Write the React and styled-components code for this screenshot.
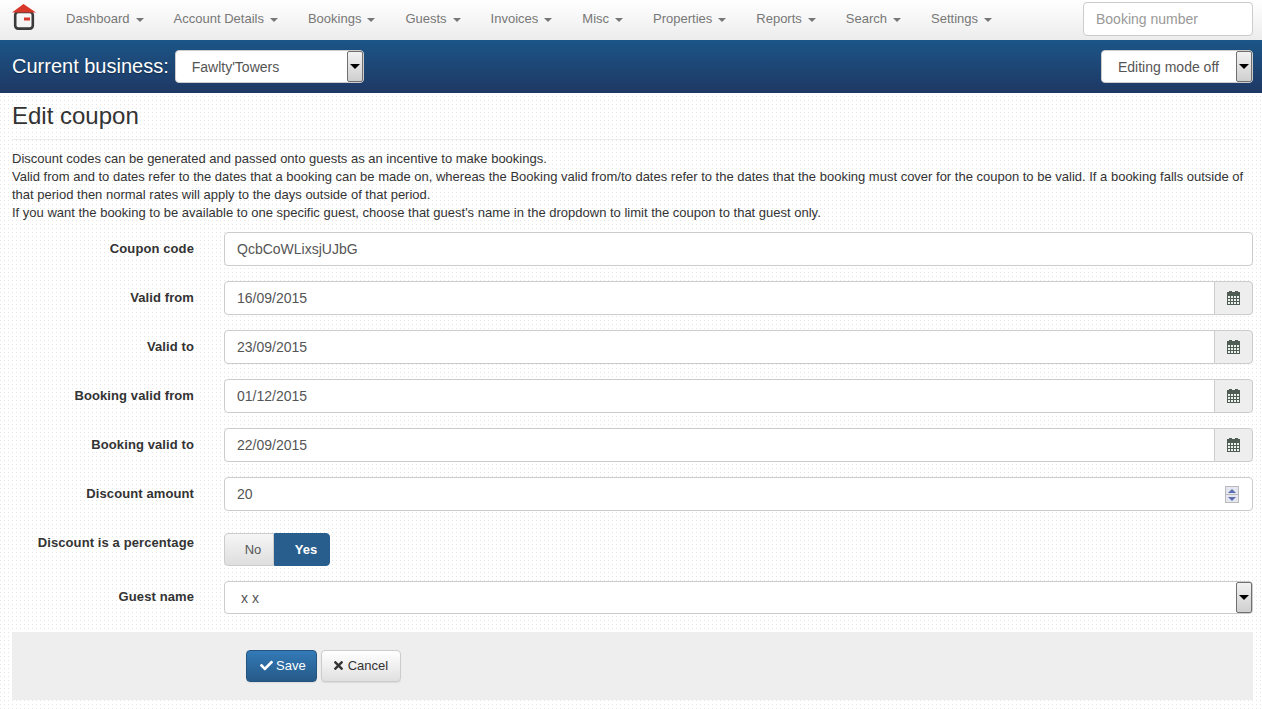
import React from 'react'
import styled, { createGlobalStyle } from 'styled-components'
import { FaCheck, FaTimes } from 'react-icons/fa'

const GlobalStyle = createGlobalStyle`
  html, body { margin: 0; padding: 0; }
  body {
    font-family: "Liberation Sans", Arial, sans-serif;
    font-size: 14px;
    color: #333;
    background-color: #fff;
    background-image: conic-gradient(at 1px 1px, transparent 75%, #e6e6e6 0);
    background-size: 4px 4px;
  }
  * { box-sizing: border-box; }
`

const Navbar = styled.nav`
  display: flex;
  align-items: flex-start;
  height: 40px;
  padding-left: 12px;
  background: linear-gradient(to bottom, #ffffff, #ececec);
`

const Logo = styled.svg`
  width: 24px;
  height: 26px;
  margin-top: 4px;
  margin-right: 15px;
`

const NavList = styled.ul`
  display: flex;
  list-style: none;
  margin: 0;
  padding: 0;
  flex: 1;
`

const NavItem = styled.li`
  padding: 0 15px;
  line-height: 37px;
  font-size: 13px;
  color: #777;
  white-space: nowrap;
`

const Caret = styled.span`
  display: inline-block;
  width: 0;
  height: 0;
  margin-left: 6px;
  vertical-align: middle;
  border-top: 4px solid #777;
  border-left: 4px solid transparent;
  border-right: 4px solid transparent;
`

const SearchInput = styled.input`
  width: 170px;
  height: 34px;
  margin: 2px 9px 0 0;
  padding: 6px 12px;
  font: 14px "Liberation Sans", Arial, sans-serif;
  border: 1px solid #ccc;
  border-radius: 4px;
  background: #fff;
  &::placeholder { color: #999; opacity: 1; }
`

const BusinessBar = styled.div`
  display: flex;
  align-items: center;
  height: 53px;
  padding: 0 9px 0 12px;
  background: linear-gradient(to bottom, #1b5587, #1f3864);
`

const BusinessLabel = styled.span`
  margin-right: 6px;
  font-size: 20px;
  color: #fff;
  text-shadow: 0 1px 1px rgba(0, 0, 0, 0.4);
`

const FakeSelect = styled.div`
  display: flex;
  align-items: center;
  justify-content: space-between;
  width: ${p => p.$width};
  height: 33px;
  margin-left: ${p => p.$push ? 'auto' : '0'};
  padding-left: 16px;
  font-size: 14px;
  color: #555;
  background: #fff;
  border: 1px solid #ccc;
  border-radius: 4px;
`

const SelectArrow = styled.span`
  display: flex;
  align-items: center;
  justify-content: center;
  align-self: stretch;
  width: 16px;
  border: 1px solid #707070;
  border-radius: 2px;
  background: linear-gradient(to bottom, #f2f2f2, #cfcfcf);
  &::after {
    content: '';
    border-top: 5px solid #000;
    border-left: 5px solid transparent;
    border-right: 5px solid transparent;
  }
`

const Content = styled.main`
  padding: 0 9px 0 12px;
`

const PageTitle = styled.h1`
  margin: 0;
  padding: 8px 0 9px;
  font-size: 24px;
  font-weight: 400;
  line-height: 29px;
  border-bottom: 1px solid #eee;
`

const Intro = styled.div`
  margin: 10px 0 10px;
  font-size: 13px;
  line-height: 18px;
`

const Row = styled.div`
  display: flex;
  align-items: flex-start;
  margin-bottom: 15px;
`

const Label = styled.label`
  flex: 0 0 182px;
  padding-top: ${p => p.$tight ? '7px' : '8px'};
  font-size: 13px;
  font-weight: 700;
  line-height: 18px;
  letter-spacing: 0.1px;
  text-align: right;
`

const Control = styled.div`
  display: flex;
  flex: 1;
  margin-left: 30px;
  position: relative;
`

const TextInput = styled.input`
  flex: 1;
  min-width: 0;
  height: 34px;
  padding: 6px 12px;
  font: 14px "Liberation Sans", Arial, sans-serif;
  color: #555;
  background: #fff;
  border: 1px solid #ccc;
  border-radius: ${p => p.$joined ? '4px 0 0 4px' : '4px'};
`

const Addon = styled.span`
  display: flex;
  align-items: center;
  justify-content: center;
  width: 39px;
  height: 34px;
  margin-left: -1px;
  background: #eee;
  border: 1px solid #ccc;
  border-radius: 0 4px 4px 0;
`

const Spinner = styled.span`
  position: absolute;
  top: 9px;
  right: 14px;
  display: flex;
  flex-direction: column;
  width: 14px;
  height: 17px;
  border: 1px solid #bbb;
  background: #e4e6f0;
`

const SpinHalf = styled.span`
  flex: 1;
  display: flex;
  align-items: center;
  justify-content: center;
  & + & { border-top: 1px solid #bbb; }
  &::after {
    content: '';
    border-left: 4px solid transparent;
    border-right: 4px solid transparent;
    border-${p => p.$down ? 'top' : 'bottom'}: 4px solid #5b6fb0;
  }
`

const Toggle = styled.div`
  display: flex;
  height: 33px;
  margin-top: 7px;
`

const ToggleOption = styled.span`
  display: flex;
  align-items: center;
  justify-content: center;
  width: ${p => p.$on ? '56px' : '50px'};
  padding-left: 8px;
  font-size: 13px;
  font-weight: ${p => p.$on ? 700 : 400};
  color: ${p => p.$on ? '#fff' : '#555'};
  background: ${p => p.$on ? '#285e8e' : 'linear-gradient(to bottom, #f6f6f6, #dedede)'};
  border: 1px solid ${p => p.$on ? '#285e8e' : '#ccc'};
  border-radius: ${p => p.$on ? '0 4px 4px 0' : '4px 0 0 4px'};
`

const FormActions = styled.div`
  display: flex;
  gap: 4px;
  height: 68px;
  margin-top: 18px;
  padding: 18px 0 0 234px;
  background: #eee;
`

const Button = styled.button`
  display: flex;
  align-items: center;
  gap: 3px;
  height: 32px;
  padding: ${p => p.$primary ? '0 10px 2px 13px' : '0 12px 2px 10px'};
  font: 13px "Liberation Sans", Arial, sans-serif;
  color: ${p => p.$primary ? '#fff' : '#333'};
  background: ${p => p.$primary
    ? 'linear-gradient(to bottom, #337ab7, #265a88)'
    : 'linear-gradient(to bottom, #fff, #e0e0e0)'};
  border: 1px solid ${p => p.$primary ? '#245580' : '#ccc'};
  border-radius: 4px;
  box-shadow: 0 1px 1px rgba(0, 0, 0, 0.08);
`

const CalendarSvg = styled.svg`
  width: 13px;
  height: 14px;
  shape-rendering: crispEdges;
`

const CalendarIcon = () => (
  <CalendarSvg viewBox="0 0 13 14">
    <rect x="0" y="1" width="13" height="13" fill="#4f5d55" />
    <rect x="2" y="0" width="3" height="3" fill="#4f5d55" />
    <rect x="8" y="0" width="3" height="3" fill="#4f5d55" />
    {[5, 8, 11].flatMap(y => [1, 4, 7, 10].map(x => (
      <rect key={`${x}-${y}`} x={x} y={y} width="2" height="2" fill="#eef2ee" />
    )))}
  </CalendarSvg>
)

const menu = ['Dashboard', 'Account Details', 'Bookings', 'Guests', 'Invoices', 'Misc', 'Properties', 'Reports', 'Search', 'Settings']

const dateFields = [
  ['Valid from', '16/09/2015'],
  ['Valid to', '23/09/2015'],
  ['Booking valid from', '01/12/2015'],
  ['Booking valid to', '22/09/2015'],
]

const App = () => (
  <>
    <GlobalStyle />
    <Navbar>
      <Logo viewBox="0 0 24 26">
        <rect x="3.2" y="8" width="17.6" height="16.6" rx="3" fill="none" stroke="#3a3a3a" strokeWidth="2.6" />
        <path d="M0 8.5 L11.5 0 L24 8.5 Z" fill="#d8382a" />
        <rect x="12" y="13.5" width="6" height="3" fill="#d8382a" />
      </Logo>
      <NavList>
        {menu.map(item => (
          <NavItem key={item}>{item}<Caret /></NavItem>
        ))}
      </NavList>
      <SearchInput placeholder="Booking number" />
    </Navbar>
    <BusinessBar>
      <BusinessLabel>Current business:</BusinessLabel>
      <FakeSelect $width="189px">Fawlty'Towers<SelectArrow /></FakeSelect>
      <FakeSelect $width="152px" $push>Editing mode off<SelectArrow /></FakeSelect>
    </BusinessBar>
    <Content>
      <PageTitle>Edit coupon</PageTitle>
      <Intro>
        Discount codes can be generated and passed onto guests as an incentive to make bookings.<br />
        Valid from and to dates refer to the dates that a booking can be made on, whereas the Booking valid from/to dates refer to the dates that the booking must cover for the coupon to be valid. If a booking falls outside of that period then normal rates will apply to the days outside of that period.<br />
        If you want the booking to be available to one specific guest, choose that guest's name in the dropdown to limit the coupon to that guest only.
      </Intro>
      <Row>
        <Label>Coupon code</Label>
        <Control><TextInput defaultValue="QcbCoWLixsjUJbG" /></Control>
      </Row>
      {dateFields.map(([label, value]) => (
        <Row key={label}>
          <Label>{label}</Label>
          <Control>
            <TextInput $joined defaultValue={value} />
            <Addon><CalendarIcon /></Addon>
          </Control>
        </Row>
      ))}
      <Row>
        <Label>Discount amount</Label>
        <Control>
          <TextInput defaultValue="20" />
          <Spinner><SpinHalf /><SpinHalf $down /></Spinner>
        </Control>
      </Row>
      <Row>
        <Label>Discount is a percentage</Label>
        <Control>
          <Toggle>
            <ToggleOption>No</ToggleOption>
            <ToggleOption $on>Yes</ToggleOption>
          </Toggle>
        </Control>
      </Row>
      <Row>
        <Label $tight>Guest name</Label>
        <Control>
          <FakeSelect $width="100%">x x<SelectArrow /></FakeSelect>
        </Control>
      </Row>
      <FormActions>
        <Button $primary><FaCheck />Save</Button>
        <Button><FaTimes />Cancel</Button>
      </FormActions>
    </Content>
  </>
)

export default App
